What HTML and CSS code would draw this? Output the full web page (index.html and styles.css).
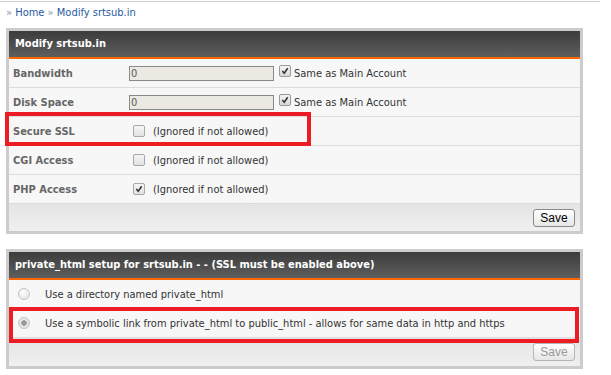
FILE: index.html
```html
<!DOCTYPE html>
<html lang="en">
<head>
  <meta charset="UTF-8" />
  <title>Modify srtsub.in</title>
  <link rel="stylesheet" href="styles.css">
</head>
<body>
  <div class="topline"></div>
  <div class="crumbs">
    <span class="raquo">&raquo;</span> <a href="#">Home</a> <span class="raquo">&raquo;</span> <a href="#">Modify srtsub.in</a>
  </div>

  <!-- Modify domain -->
  <section class="panel">
    <h2 class="panel-head">Modify srtsub.in</h2>
    <div class="row">
      <div class="label">Bandwidth</div>
      <div class="value">
        <input class="field" type="text" value="0" readonly>
        <span class="cb checked"><svg viewBox="0 0 13 13"><path d="M3 6.5l2.5 3 4.5-6.5" /></svg></span>
        <span>Same as Main Account</span>
      </div>
    </div>
    <div class="row">
      <div class="label">Disk Space</div>
      <div class="value">
        <input class="field" type="text" value="0" readonly>
        <span class="cb checked"><svg viewBox="0 0 13 13"><path d="M3 6.5l2.5 3 4.5-6.5" /></svg></span>
        <span>Same as Main Account</span>
      </div>
    </div>
    <div class="row">
      <div class="label">Secure SSL</div>
      <div class="value">
        <span class="cb plain"></span>
        <span class="note">(Ignored if not allowed)</span>
      </div>
    </div>
    <div class="row">
      <div class="label">CGI Access</div>
      <div class="value">
        <span class="cb plain"></span>
        <span class="note">(Ignored if not allowed)</span>
      </div>
    </div>
    <div class="row">
      <div class="label">PHP Access</div>
      <div class="value">
        <span class="cb plain checked"><svg viewBox="0 0 13 13"><path d="M3 6.5l2.5 3 4.5-6.5" /></svg></span>
        <span class="note">(Ignored if not allowed)</span>
      </div>
    </div>
    <div class="panel-foot">
      <button class="btn">Save</button>
    </div>
    <div class="mark mark-ssl"></div>
  </section>

  <!-- private_html -->
  <section class="panel">
    <h2 class="panel-head">private_html setup for srtsub.in - - (SSL must be enabled above)</h2>
    <div class="row radio-row">
      <span class="radio"></span>
      <span>Use a directory named private_html</span>
    </div>
    <div class="row radio-row">
      <span class="radio on"></span>
      <span>Use a symbolic link from private_html to public_html - allows for same data in http and https</span>
    </div>
    <div class="panel-foot foot-tall">
      <button class="btn" disabled>Save</button>
    </div>
    <div class="mark mark-link"></div>
  </section>
</body>
</html>
```

FILE: styles.css
```css
*, *::before, *::after {
  box-sizing: border-box;
}

body {
  margin: 0;
  padding: 1px 0 0;
  font-family: "DejaVu Sans Condensed", "DejaVu Sans", Verdana, sans-serif;
  font-stretch: condensed;
  font-size: 11px;
  color: #333;
  background: #fff;
}

.topline {
  width: 600px;
  height: 1px;
  background: #ccc;
}

/* Breadcrumb */
.crumbs {
  padding: 4px 6px 0;
  height: 26px;
  line-height: 14px;
  color: #999;
}

.crumbs a {
  color: #1f5a9e;
  text-decoration: none;
}

.crumbs .raquo {
  color: #8a9aa8;
}

/* Panels */
.panel {
  position: relative;
  width: 577px;
  margin: 0 0 15px 6px;
  border: 3px solid #ccc;
  background: #f7f7f7;
}

.panel-head {
  margin: 0;
  height: 28px;
  padding: 0 6px;
  line-height: 26px;
  font-size: 11px;
  font-weight: bold;
  color: #fff;
  background: linear-gradient(#3c3c3c, #5e5e5e);
  border-bottom: 2px solid #ff6600;
  white-space: nowrap;
}

.row {
  display: flex;
  align-items: center;
  height: 29px;
  border-bottom: 1px solid #dcdcdc;
}

.label {
  width: 120px;
  padding-left: 4px;
  font-weight: bold;
  color: #666;
}

.value {
  display: flex;
  align-items: center;
}

.field {
  width: 145px;
  height: 15px;
  margin: 0 5px 0 0;
  padding: 0 1px;
  border: 1px solid #888;
  background: #ebe9e1;
  font-family: "DejaVu Sans Condensed", "DejaVu Sans", Verdana, sans-serif;
  font-stretch: condensed;
  font-size: 11px;
  color: #5a5a5a;
  outline: none;
}

/* Checkboxes */
.cb {
  display: inline-block;
  width: 12px;
  height: 12px;
  margin: 0 3px 0 0;
  border: 1px solid #9a9a9a;
  border-radius: 2px;
  background: linear-gradient(#f4f4f4, #d8d8d8);
  position: relative;
  top: -2px;
}

.cb.plain {
  width: 12px;
  height: 12px;
  margin: 0 8px 0 4px;
  border-color: #a8a8a8;
  background: linear-gradient(#f6f6f6, #e2e2e2);
  top: 0;
}

.cb svg {
  display: block;
  width: 10px;
  height: 10px;
  fill: none;
  stroke: #333;
  stroke-width: 2;
}

/* Radios */
.radio-row {
  padding-left: 9px;
}

.radio {
  display: inline-block;
  width: 12px;
  height: 12px;
  margin-right: 15px;
  border: 1px solid #c4c4c4;
  border-radius: 50%;
  background: radial-gradient(circle at 40% 35%, #fdfdfd, #e0e0e0);
}

.radio.on {
  background: radial-gradient(circle, #9a9a9a 0 2.5px, #e6e6e6 3px);
}

/* Footer */
.panel-foot {
  display: flex;
  justify-content: flex-end;
  align-items: center;
  height: 27px;
  padding-right: 5px;
  background: linear-gradient(#e4e4e4, #f0f0f0);
}

.foot-tall {
  height: 28px;
}

.btn {
  width: 42px;
  height: 18px;
  padding: 0;
  border: 1px solid #8a8a8a;
  border-radius: 3px;
  background: linear-gradient(#ffffff, #e6e6e6);
  font-family: "Liberation Sans", Arial, sans-serif;
  font-size: 12px;
  color: #000;
}

.btn:disabled {
  border-color: #b4b4b4;
  color: #999;
}

/* Red annotation boxes */
.mark {
  position: absolute;
  border: 4px solid #ed1c24;
  pointer-events: none;
}

.mark-ssl {
  left: -4px;
  top: 81px;
  width: 306px;
  height: 34px;
}

.mark-link {
  left: 0;
  top: 55px;
  width: 570px;
  height: 36px;
}
```
